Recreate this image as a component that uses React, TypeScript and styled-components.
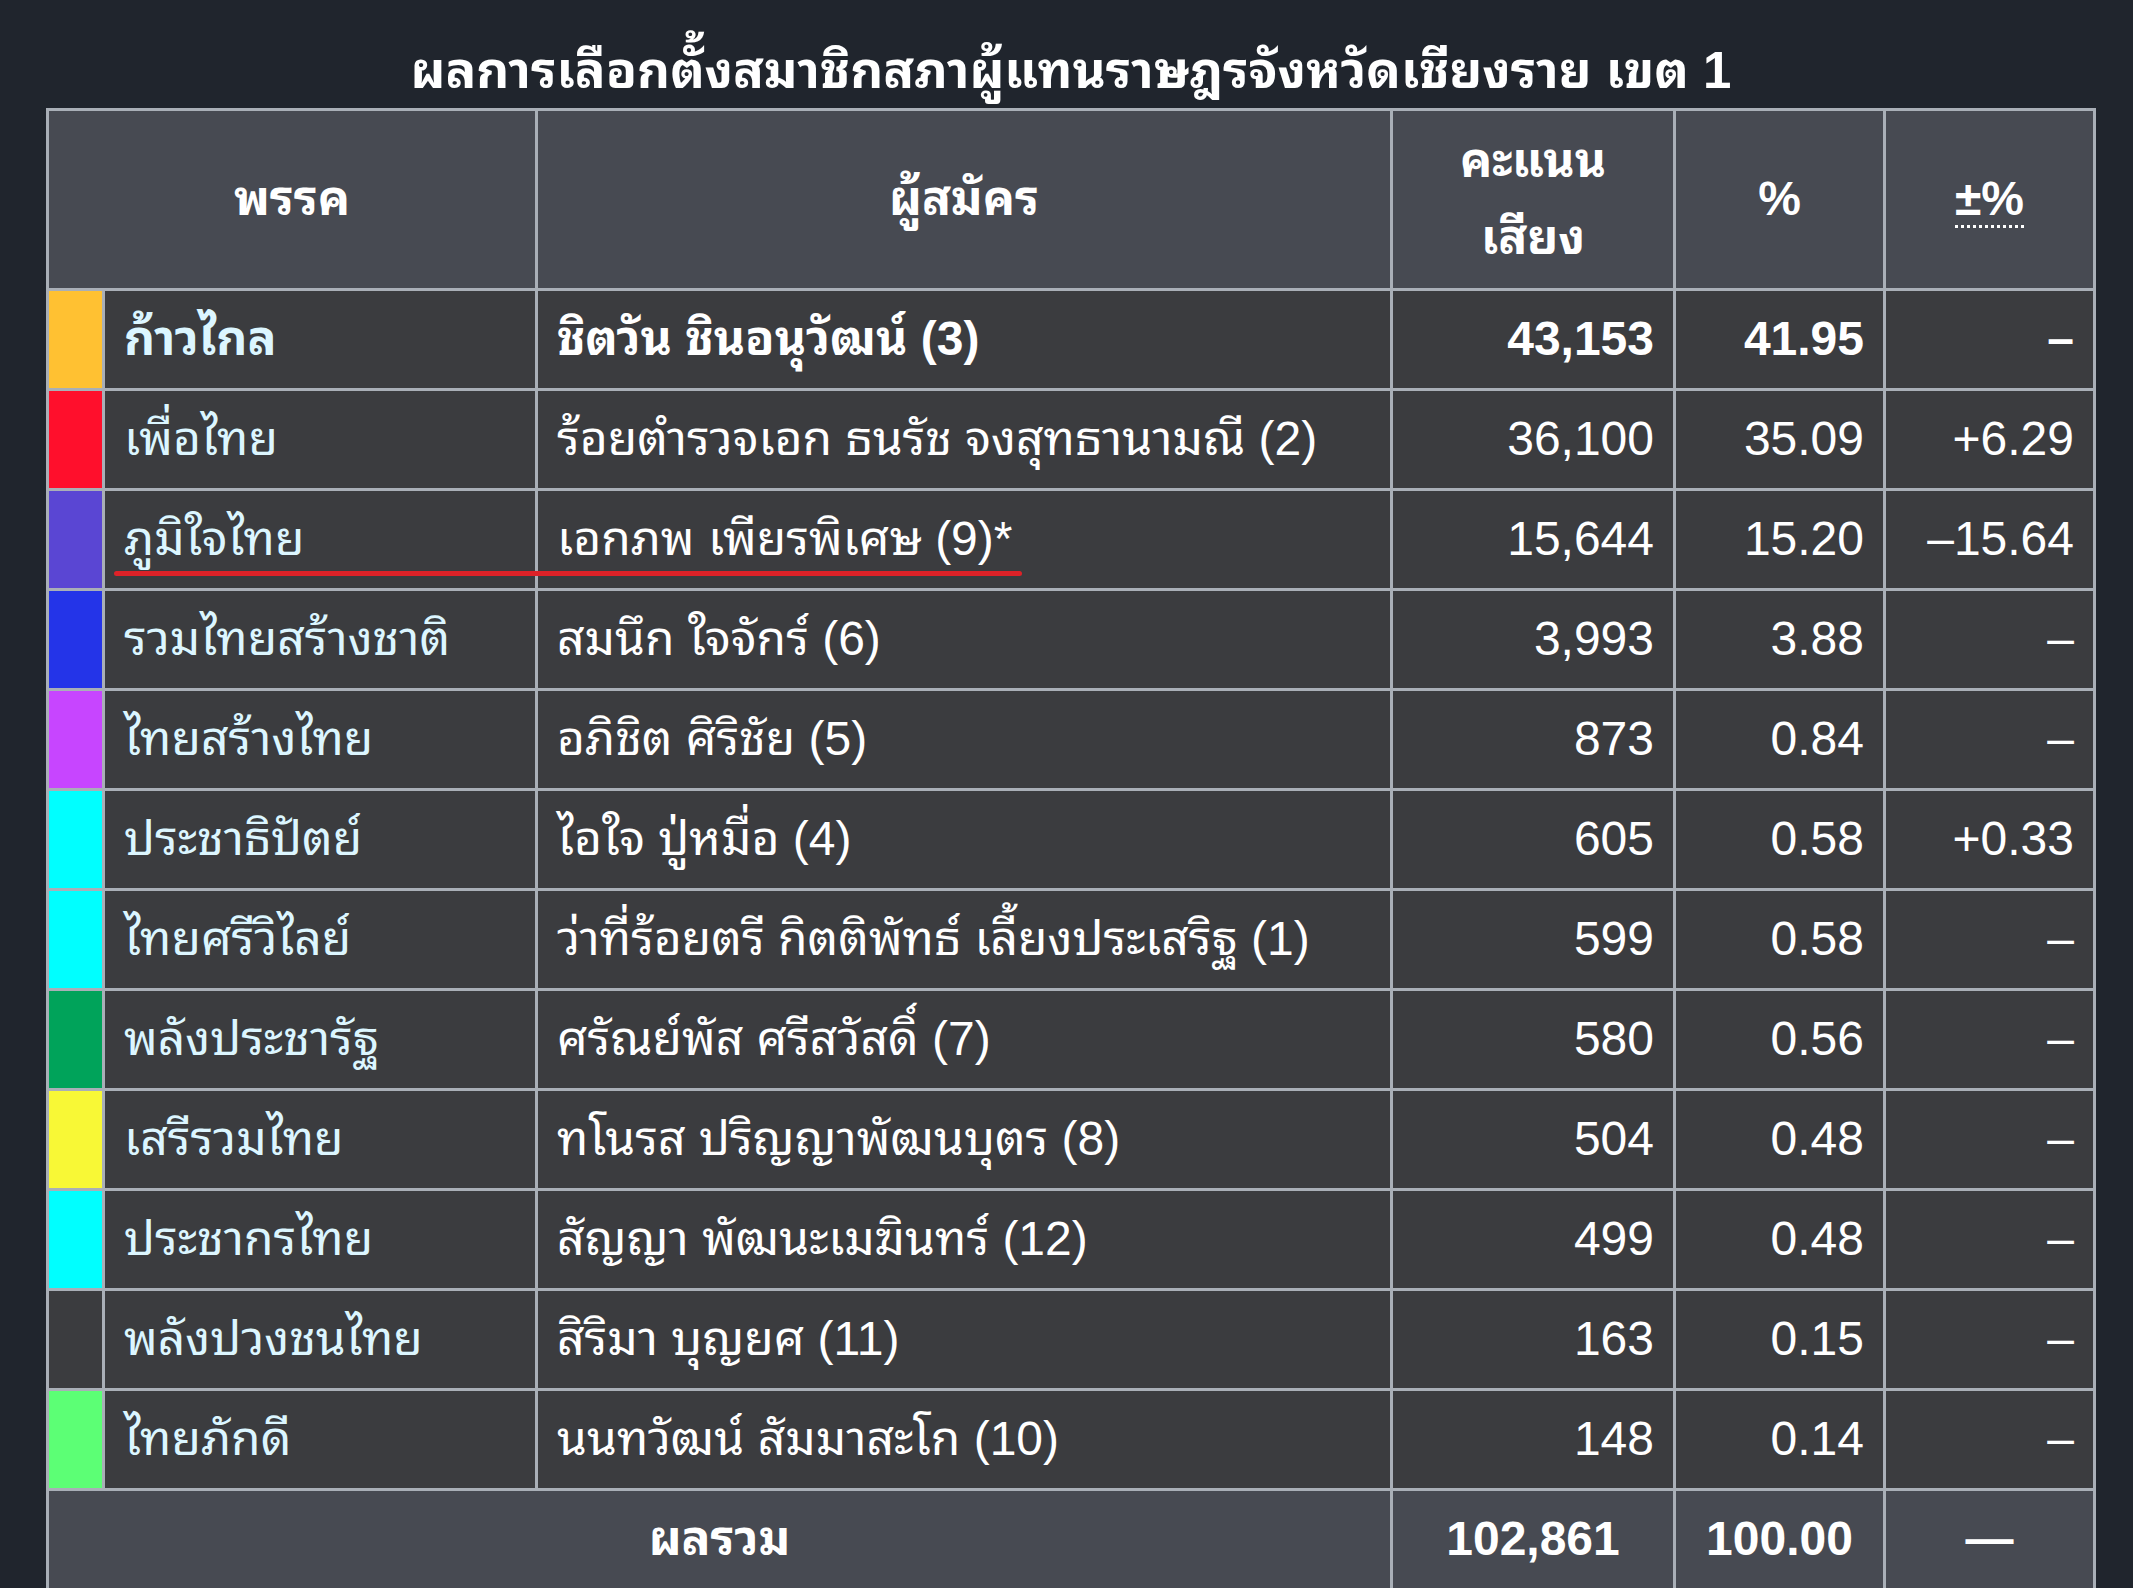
import React from "react";
import styled, { createGlobalStyle } from "styled-components";

interface Row {
  color: string;
  party: string;
  candidate: string;
  votes: string;
  pct: string;
  change: string;
  winner?: boolean;
  marked?: boolean;
}

const rows: Row[] = [
  { color: "#ffc132", party: "ก้าวไกล", candidate: "ชิตวัน ชินอนุวัฒน์ (3)", votes: "43,153", pct: "41.95", change: "–", winner: true },
  { color: "#ff0f2c", party: "เพื่อไทย", candidate: "ร้อยตำรวจเอก ธนรัช จงสุทธานามณี (2)", votes: "36,100", pct: "35.09", change: "+6.29" },
  { color: "#5a46d3", party: "ภูมิใจไทย", candidate: "เอกภพ เพียรพิเศษ (9)*", votes: "15,644", pct: "15.20", change: "–15.64", marked: true },
  { color: "#2434e8", party: "รวมไทยสร้างชาติ", candidate: "สมนึก ใจจักร์ (6)", votes: "3,993", pct: "3.88", change: "–" },
  { color: "#c745ff", party: "ไทยสร้างไทย", candidate: "อภิชิต ศิริชัย (5)", votes: "873", pct: "0.84", change: "–" },
  { color: "#00ffff", party: "ประชาธิปัตย์", candidate: "ไอใจ ปู่หมื่อ (4)", votes: "605", pct: "0.58", change: "+0.33" },
  { color: "#00ffff", party: "ไทยศรีวิไลย์", candidate: "ว่าที่ร้อยตรี กิตติพัทธ์ เลี้ยงประเสริฐ (1)", votes: "599", pct: "0.58", change: "–" },
  { color: "#00a35a", party: "พลังประชารัฐ", candidate: "ศรัณย์พัส ศรีสวัสดิ์ (7)", votes: "580", pct: "0.56", change: "–" },
  { color: "#f8f836", party: "เสรีรวมไทย", candidate: "ทโนรส ปริญญาพัฒนบุตร (8)", votes: "504", pct: "0.48", change: "–" },
  { color: "#00ffff", party: "ประชากรไทย", candidate: "สัญญา พัฒนะเมฆินทร์ (12)", votes: "499", pct: "0.48", change: "–" },
  { color: "#3b3c3f", party: "พลังปวงชนไทย", candidate: "สิริมา บุญยศ (11)", votes: "163", pct: "0.15", change: "–" },
  { color: "#5cff75", party: "ไทยภักดี", candidate: "นนทวัฒน์ สัมมาสะโก (10)", votes: "148", pct: "0.14", change: "–" },
];

const GlobalStyle = createGlobalStyle`
  body {
    margin: 0;
    background: #20252d;
    font-family: "Liberation Sans", "Noto Sans Thai Looped", "Loma", "Tahoma", "Noto Sans Thai", "Noto Sans", sans-serif;
  }
`;

const Page = styled.div`
  padding: 34px 40px 0 46px;
`;

const Table = styled.table`
  border-collapse: collapse;
  table-layout: fixed;
  width: 2047px;
  color: #ffffff;
  font-size: 48px;
  line-height: 1.6;
`;

const Caption = styled.caption`
  font-size: 51px;
  font-weight: bold;
  line-height: 74px;
  text-align: center;
`;

const HeadRow = styled.tr`
  height: 180px;
`;

const BodyRow = styled.tr`
  height: 100px;
`;

const HeadCell = styled.th`
  background: #474a52;
  border: 3px solid #a9afb7;
  padding: 9px 19px;
  text-align: center;
  font-weight: bold;
`;

const Cell = styled.td<{ $align?: string; $bold?: boolean }>`
  position: relative;
  background: #3b3c3f;
  border: 3px solid #a9afb7;
  padding: 9px 19px;
  text-align: ${(p) => p.$align || "left"};
  font-weight: ${(p) => (p.$bold ? "bold" : "normal")};
  white-space: nowrap;
`;

const Swatch = styled.td<{ $color: string }>`
  background: ${(p) => p.$color};
  border: 3px solid #a9afb7;
  padding: 0;
`;

const TotalCell = styled.td<{ $align?: string }>`
  background: #474a52;
  border: 3px solid #a9afb7;
  padding: 9px 19px;
  text-align: ${(p) => p.$align || "center"};
  font-weight: bold;
`;

const PartyName = styled.span`
  color: #dcf6ff;
`;

const Abbr = styled.span`
  border-bottom: 3px dotted #ffffff;
`;

const Mark = styled.span`
  position: absolute;
  left: 9px;
  bottom: 12px;
  width: 908px;
  height: 5px;
  border-radius: 3px;
  background: #dd2228;
  z-index: 2;
`;

const App = () => (
  <Page>
    <GlobalStyle />
    <Table>
      <Caption>ผลการเลือกตั้งสมาชิกสภาผู้แทนราษฎรจังหวัดเชียงราย เขต 1</Caption>
      <colgroup>
        <col style={{ width: 56 }} />
        <col style={{ width: 433 }} />
        <col style={{ width: 855 }} />
        <col style={{ width: 283 }} />
        <col style={{ width: 210 }} />
        <col style={{ width: 210 }} />
      </colgroup>
      <thead>
        <HeadRow>
          <HeadCell colSpan={2}>พรรค</HeadCell>
          <HeadCell>ผู้สมัคร</HeadCell>
          <HeadCell>
            คะแนน
            <br />
            เสียง
          </HeadCell>
          <HeadCell>%</HeadCell>
          <HeadCell>
            <Abbr>±%</Abbr>
          </HeadCell>
        </HeadRow>
      </thead>
      <tbody>
        {rows.map((r) => (
          <BodyRow key={r.party}>
            <Swatch $color={r.color} />
            <Cell $bold={r.winner}>
              <PartyName>{r.party}</PartyName>
              {r.marked && <Mark />}
            </Cell>
            <Cell $bold={r.winner}>{r.candidate}</Cell>
            <Cell $align="right" $bold={r.winner}>{r.votes}</Cell>
            <Cell $align="right" $bold={r.winner}>{r.pct}</Cell>
            <Cell $align="right" $bold={r.winner}>{r.change}</Cell>
          </BodyRow>
        ))}
        <BodyRow>
          <TotalCell colSpan={3}>ผลรวม</TotalCell>
          <TotalCell>102,861</TotalCell>
          <TotalCell>100.00</TotalCell>
          <TotalCell>—</TotalCell>
        </BodyRow>
      </tbody>
    </Table>
  </Page>
);

export default App;
